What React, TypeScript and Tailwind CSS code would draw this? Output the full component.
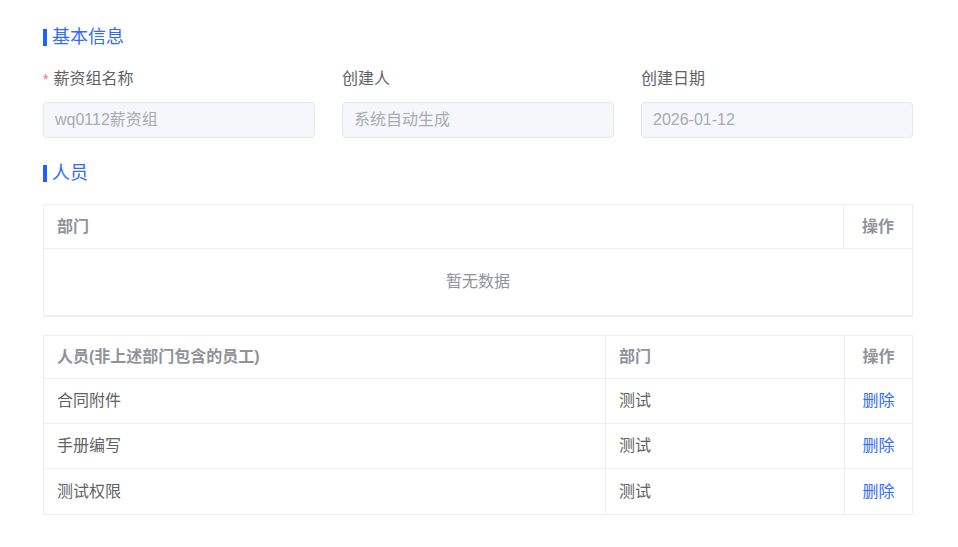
import React from 'react';

const font = { fontFamily: '"Liberation Sans", "Noto Sans CJK SC", sans-serif' };

const members = [
  { name: '合同附件', dept: '测试' },
  { name: '手册编写', dept: '测试' },
  { name: '测试权限', dept: '测试' },
];

const SectionTitle: React.FC<{ title: string }> = ({ title }) => (
  <div className="flex items-center h-5">
    <span className="w-[4px] h-[17px] bg-[#1f5eff]" />
    <span className="ml-[5px] text-[18px] leading-5 text-[#2f6bff]">{title}</span>
  </div>
);

const Field: React.FC<{ label: string; value: string; required?: boolean }> = ({ label, value, required }) => (
  <div className="flex flex-col">
    <div className="h-5 flex items-center text-[16px] text-[#606266]">
      {required && <span className="text-[#f56c6c] mr-[5px] text-[14px]">*</span>}
      {label}
    </div>
    <div className="mt-[13px] h-9 rounded-[4px] border border-[#e4e7ed] bg-[#f5f7fa] px-[11px] flex items-center text-[16px] text-[#a8abb2]">
      {value}
    </div>
  </div>
);

export default function App() {
  return (
    <div className="min-h-screen bg-white" style={font}>
      <div className="pl-[43px] pr-[45px] pt-[27px]">
        {/* 基本信息 */}
        <SectionTitle title="基本信息" />
        <div className="mt-[22px] grid grid-cols-3 gap-[27px]">
          <Field label="薪资组名称" value="wq0112薪资组" required />
          <Field label="创建人" value="系统自动生成" />
          <Field label="创建日期" value="2026-01-12" />
        </div>

        {/* 人员 */}
        <div className="mt-[25px]">
          <SectionTitle title="人员" />
        </div>

        {/* 部门表 */}
        <div className="mt-[21px] border border-[#ebeef5] border-b-2 text-[16px]">
          <div className="grid grid-cols-[1fr_68px] h-[44px] border-b border-[#ebeef5] font-semibold text-[#909399]">
            <div className="flex items-center pl-[13px] border-r border-[#ebeef5]">部门</div>
            <div className="flex items-center justify-center">操作</div>
          </div>
          <div className="h-[66px] flex items-center justify-center text-[#909399]">暂无数据</div>
        </div>

        {/* 人员表 */}
        <div className="mt-[18px] border border-[#ebeef5] text-[16px]">
          <div className="grid grid-cols-[562px_239px_1fr] h-[43px] border-b border-[#ebeef5] font-semibold text-[#909399]">
            <div className="flex items-center pl-[13px] border-r border-[#ebeef5]">人员(非上述部门包含的员工)</div>
            <div className="flex items-center pl-[13px] border-r border-[#ebeef5]">部门</div>
            <div className="flex items-center justify-center">操作</div>
          </div>
          {members.map((m, i) => (
            <div
              key={m.name}
              className={
                'grid grid-cols-[562px_239px_1fr] h-[45px] text-[#606266] ' +
                (i < members.length - 1 ? 'border-b border-[#ebeef5]' : '')
              }
            >
              <div className="flex items-center pl-[13px] border-r border-[#ebeef5]">{m.name}</div>
              <div className="flex items-center pl-[13px] border-r border-[#ebeef5]">{m.dept}</div>
              <div className="flex items-center justify-center text-[#2f6bff] cursor-pointer">删除</div>
            </div>
          ))}
        </div>
      </div>
    </div>
  );
}
